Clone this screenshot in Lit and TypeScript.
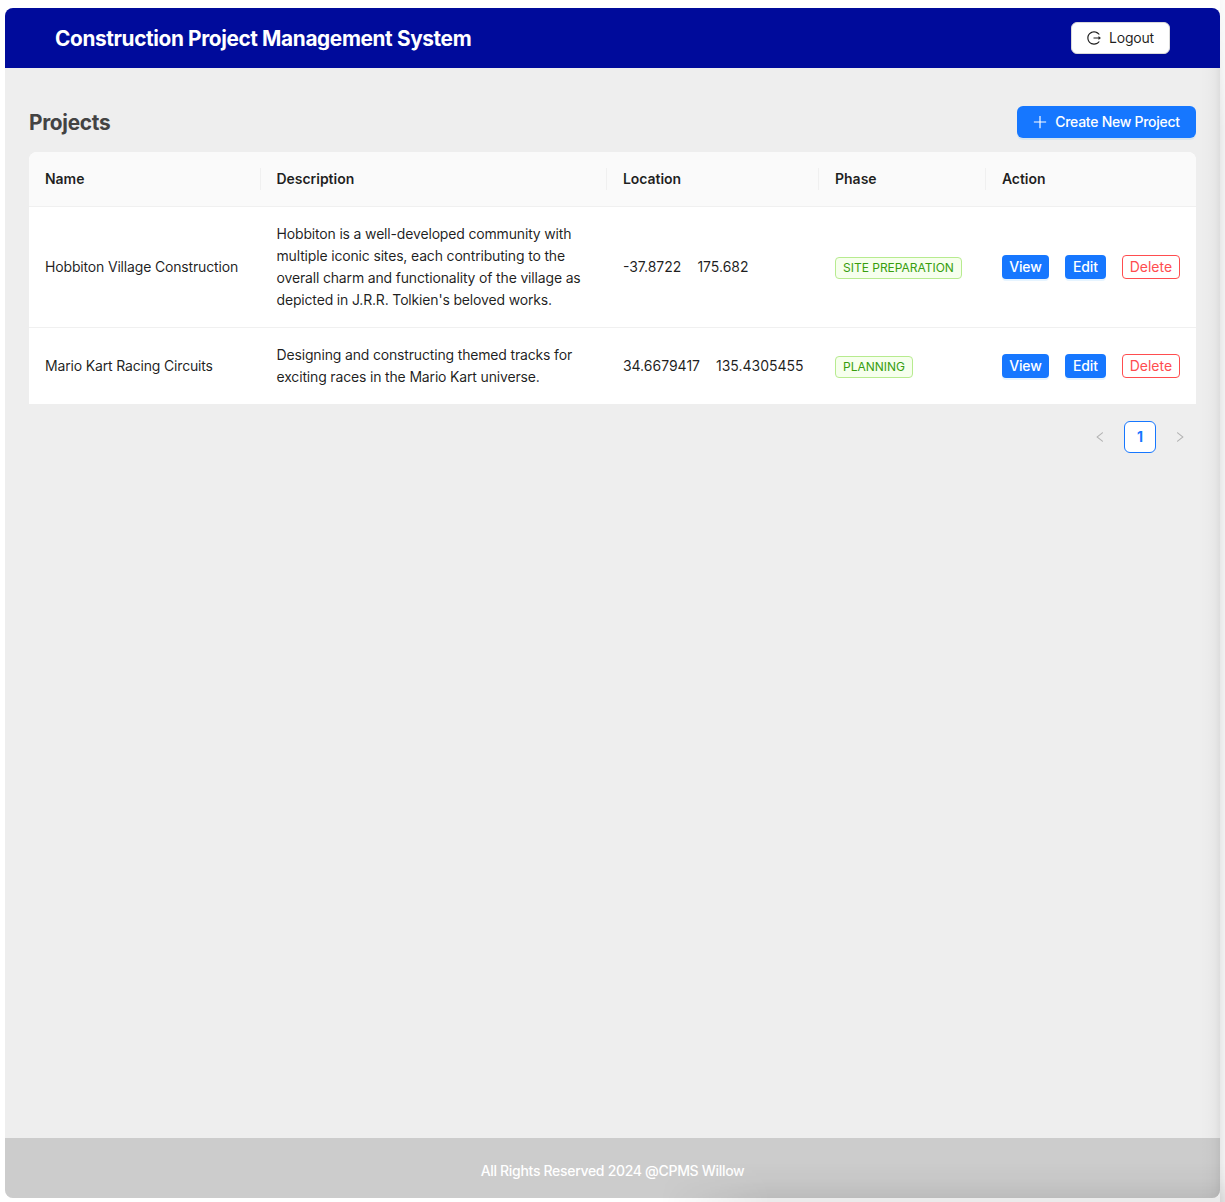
import { LitElement, html, css, svg } from "lit";
import { customElement } from "lit/decorators.js";

interface Project {
  name: string;
  description: string[];
  lat: string;
  lng: string;
  phase: string;
}

const projects: Project[] = [
  {
    name: "Hobbiton Village Construction",
    description: [
      "Hobbiton is a well-developed community with",
      "multiple iconic sites, each contributing to the",
      "overall charm and functionality of the village as",
      "depicted in J.R.R. Tolkien's beloved works.",
    ],
    lat: "-37.8722",
    lng: "175.682",
    phase: "SITE PREPARATION",
  },
  {
    name: "Mario Kart Racing Circuits",
    description: [
      "Designing and constructing themed tracks for",
      "exciting races in the Mario Kart universe.",
    ],
    lat: "34.6679417",
    lng: "135.4305455",
    phase: "PLANNING",
  },
];

const columns = ["Name", "Description", "Location", "Phase", "Action"];

const logoutPath = svg`<path d="M868 732h-70.3c-4.8 0-9.3 2.1-12.3 5.8-7 8.5-14.5 16.7-22.4 24.5a353.84 353.84 0 01-112.7 75.9A352.8 352.8 0 01512.4 866c-47.9 0-94.3-9.4-137.9-27.8a353.84 353.84 0 01-112.7-75.9 353.28 353.28 0 01-76-112.5C167.3 606.2 158 559.9 158 512s9.4-94.2 27.8-137.8c17.8-42.1 43.4-80 76-112.5s70.5-58.1 112.7-75.9c43.6-18.4 90-27.8 137.9-27.8 47.9 0 94.3 9.3 137.9 27.8 42.2 17.8 80.1 43.4 112.7 75.9 7.9 7.9 15.3 16.1 22.4 24.5 3 3.7 7.6 5.8 12.3 5.8H868c6.3 0 10.2-7 6.7-12.3C798 160.5 663.8 81.6 511.3 82 271.7 82.6 79.6 277.1 82 516.4 84.4 751.9 276.2 942 512.4 942c152.1 0 285.7-78.8 362.3-197.7 3.4-5.3-.4-12.3-6.7-12.3zm88.9-226.3L815 393.7c-5.3-4.2-13-.4-13 6.3v76H488c-4.4 0-8 3.6-8 8v56c0 4.4 3.6 8 8 8h314v76c0 6.7 7.8 10.5 13 6.3l141.9-112a8 8 0 000-12.6z"/>`;
const plusPath = svg`<path d="M482 120h60q8 0 8 8v768q0 8-8 8h-60q-8 0-8-8V128q0-8 8-8z"/><path d="M128 474h768q8 0 8 8v60q0 8-8 8H128q-8 0-8-8v-60q0-8 8-8z"/>`;
const leftPath = svg`<path d="M724 218.3V141c0-6.7-7.7-10.4-12.9-6.3L260.3 486.8a31.86 31.86 0 000 50.3l450.8 352.1c5.3 4.1 12.9.4 12.9-6.3v-77.3c0-4.9-2.3-9.6-6.1-12.6l-360-281 360-281.1c3.8-3 6.1-7.7 6.1-12.6z"/>`;

@customElement("app-root")
export class AppRoot extends LitElement {
  static styles = css`
    :host {
      display: block;
      box-sizing: border-box;
      position: relative;
      height: 1202px;
      padding: 8px 5px 4px;
      background: #fff;
      overflow: hidden;
      font-family: Inter, sans-serif;
      font-size: 14px;
      line-height: 22px;
      color: rgba(0, 0, 0, 0.88);
    }
    .app {
      display: flex;
      flex-direction: column;
      height: 1190px;
      border-radius: 8px;
      overflow: hidden;
      background: #eee;
    }
    header {
      display: flex;
      align-items: center;
      justify-content: space-between;
      height: 60px;
      padding: 0 50px;
      background: #000b9b;
    }
    h1, h2 { margin: 0; padding-top: 1px; font-weight: 700; line-height: 30px; }
    h1 { font-size: 20.8px; color: #fff; letter-spacing: -0.37px; }
    h2 { font-size: 20.8px; color: #434343; letter-spacing: -0.29px; }
    main { flex: 1; padding: 38px 24px 0; }
    button {
      box-sizing: border-box;
      display: inline-flex;
      align-items: center;
      justify-content: center;
      gap: 8px;
      font: inherit;
      height: 32px;
      padding: 0 15px;
      border: 1px solid transparent;
      border-radius: 6px;
      white-space: nowrap;
    }
    svg { display: block; flex: none; width: 14px; height: 14px; fill: currentColor; }
    .logout {
      width: 99px;
      letter-spacing: -0.2px;
      background: #fff;
      border-color: #d9d9d9;
      color: rgba(0, 0, 0, 0.88);
      box-shadow: 0 2px 0 rgba(0, 0, 0, 0.02);
    }
    .primary {
      background: #1677ff;
      color: #fff;
      box-shadow: 0 2px 0 rgba(5, 145, 255, 0.1);
    }
    .create { width: 179px; font-weight: 500; letter-spacing: -0.27px; }
    .toolbar {
      display: flex;
      align-items: center;
      justify-content: space-between;
      height: 32px;
      margin-bottom: 14px;
    }
    .table { background: #fff; border-radius: 8px 8px 0 0; overflow: hidden; }
    .row {
      display: grid;
      grid-template-columns: 231.5px 346.4px 212.2px 166.8px 1fr;
      align-items: center;
      border-bottom: 1px solid #f0f0f0;
    }
    .row:last-child { border-bottom: 0; }
    .head { background: #fafafa; font-weight: 600; letter-spacing: -0.03px; }
    .cell { padding: 16px; white-space: nowrap; }
    .prose { letter-spacing: -0.165px; }
    .head .cell { display: flex; justify-content: space-between; padding-right: 0; }
    .head .cell:not(:last-child)::after {
      content: "";
      width: 1px;
      height: 22px;
      background: #f0f0f0;
    }
    .line { display: block; }
    .group { display: flex; gap: 16px; }
    .tag {
      box-sizing: border-box;
      display: block;
      width: fit-content;
      height: 22px;
      margin-top: 1px;
      margin-bottom: -1px;
      padding: 0 7px;
      font-size: 12px;
      line-height: 20px;
      letter-spacing: -0.02px;
      color: #389e0d;
      background: #f6ffed;
      border: 1px solid #b7eb8f;
      border-radius: 4px;
    }
    .small { height: 24px; padding: 0; border-radius: 4px; margin: -1px 0; }
    .view { width: 47px; font-weight: 500; letter-spacing: -0.15px; }
    .edit { width: 41px; font-weight: 500; letter-spacing: -0.15px; }
    .delete { width: 58px; background: #fff; border-color: #ff4d4f; color: #ff4d4f; }
    .pager { display: flex; justify-content: flex-end; gap: 8px; margin-top: 17px; }
    .arrow, .page {
      box-sizing: border-box;
      display: flex;
      align-items: center;
      justify-content: center;
      width: 32px;
      height: 32px;
    }
    .arrow { color: rgba(0, 0, 0, 0.25); }
    .arrow svg { width: 12px; height: 12px; }
    .next svg { transform: scaleX(-1); }
    .page {
      background: #fff;
      border: 1px solid #1677ff;
      border-radius: 6px;
      color: #1677ff;
      font-weight: 700;
    }
    footer {
      box-sizing: border-box;
      height: 60px;
      padding-top: 22px;
      text-align: center;
      color: #fff;
      background: #ccc;
      font-weight: 500;
      letter-spacing: -0.31px;
    }
    .shade { position: absolute; pointer-events: none; }
    .shade-right.body {
      top: 68px;
      bottom: 4px;
      right: 5px;
      width: 20px;
      background: linear-gradient(to right, transparent, rgba(0, 0, 0, 0.012) 45%, rgba(0, 0, 0, 0.03) 75%, rgba(0, 0, 0, 0.07));
      border-radius: 0 0 8px 0;
    }
    .shade-right.edge {
      top: 0;
      right: 0;
      bottom: 0;
      width: 5px;
      background: linear-gradient(to right, rgba(0, 0, 0, 0.09), rgba(0, 0, 0, 0.05));
      mask-image: linear-gradient(rgba(0, 0, 0, 0.3), #000 130px);
    }
    .shade-bottom {
      left: 660px;
      right: 0;
      bottom: 0;
      height: 40px;
      background: linear-gradient(to bottom, transparent, rgba(0, 0, 0, 0.02) 40%, rgba(0, 0, 0, 0.075) 90%, rgba(0, 0, 0, 0.08));
      mask-image: linear-gradient(to right, transparent, #000 110px);
    }
  `;

  private icon(paths: unknown) {
    return html`<svg viewBox="64 64 896 896" aria-hidden="true">${paths}</svg>`;
  }

  render() {
    return html`
      <div class="app">
        <header>
          <h1>Construction Project Management System</h1>
          <button class="logout">${this.icon(logoutPath)}<span>Logout</span></button>
        </header>
        <main>
          <div class="toolbar">
            <h2>Projects</h2>
            <button class="primary create">${this.icon(plusPath)}<span>Create New Project</span></button>
          </div>
          <div class="table">
            <div class="row head">
              ${columns.map((c) => html`<div class="cell"><span>${c}</span></div>`)}
            </div>
            ${projects.map(
              (p) => html`<div class="row">
                <div class="cell prose">${p.name}</div>
                <div class="cell prose">${p.description.map((l) => html`<span class="line">${l}</span>`)}</div>
                <div class="cell group"><span>${p.lat}</span><span>${p.lng}</span></div>
                <div class="cell"><span class="tag">${p.phase}</span></div>
                <div class="cell group">
                  <button class="primary small view">View</button>
                  <button class="primary small edit">Edit</button>
                  <button class="small delete">Delete</button>
                </div>
              </div>`
            )}
          </div>
          <div class="pager">
            <span class="arrow">${this.icon(leftPath)}</span>
            <span class="page">1</span>
            <span class="arrow next">${this.icon(leftPath)}</span>
          </div>
        </main>
        <footer>All Rights Reserved 2024 @CPMS Willow</footer>
      </div>
      <div class="shade shade-right body"></div>
      <div class="shade shade-right edge"></div>
      <div class="shade shade-bottom"></div>
    `;
  }
}
